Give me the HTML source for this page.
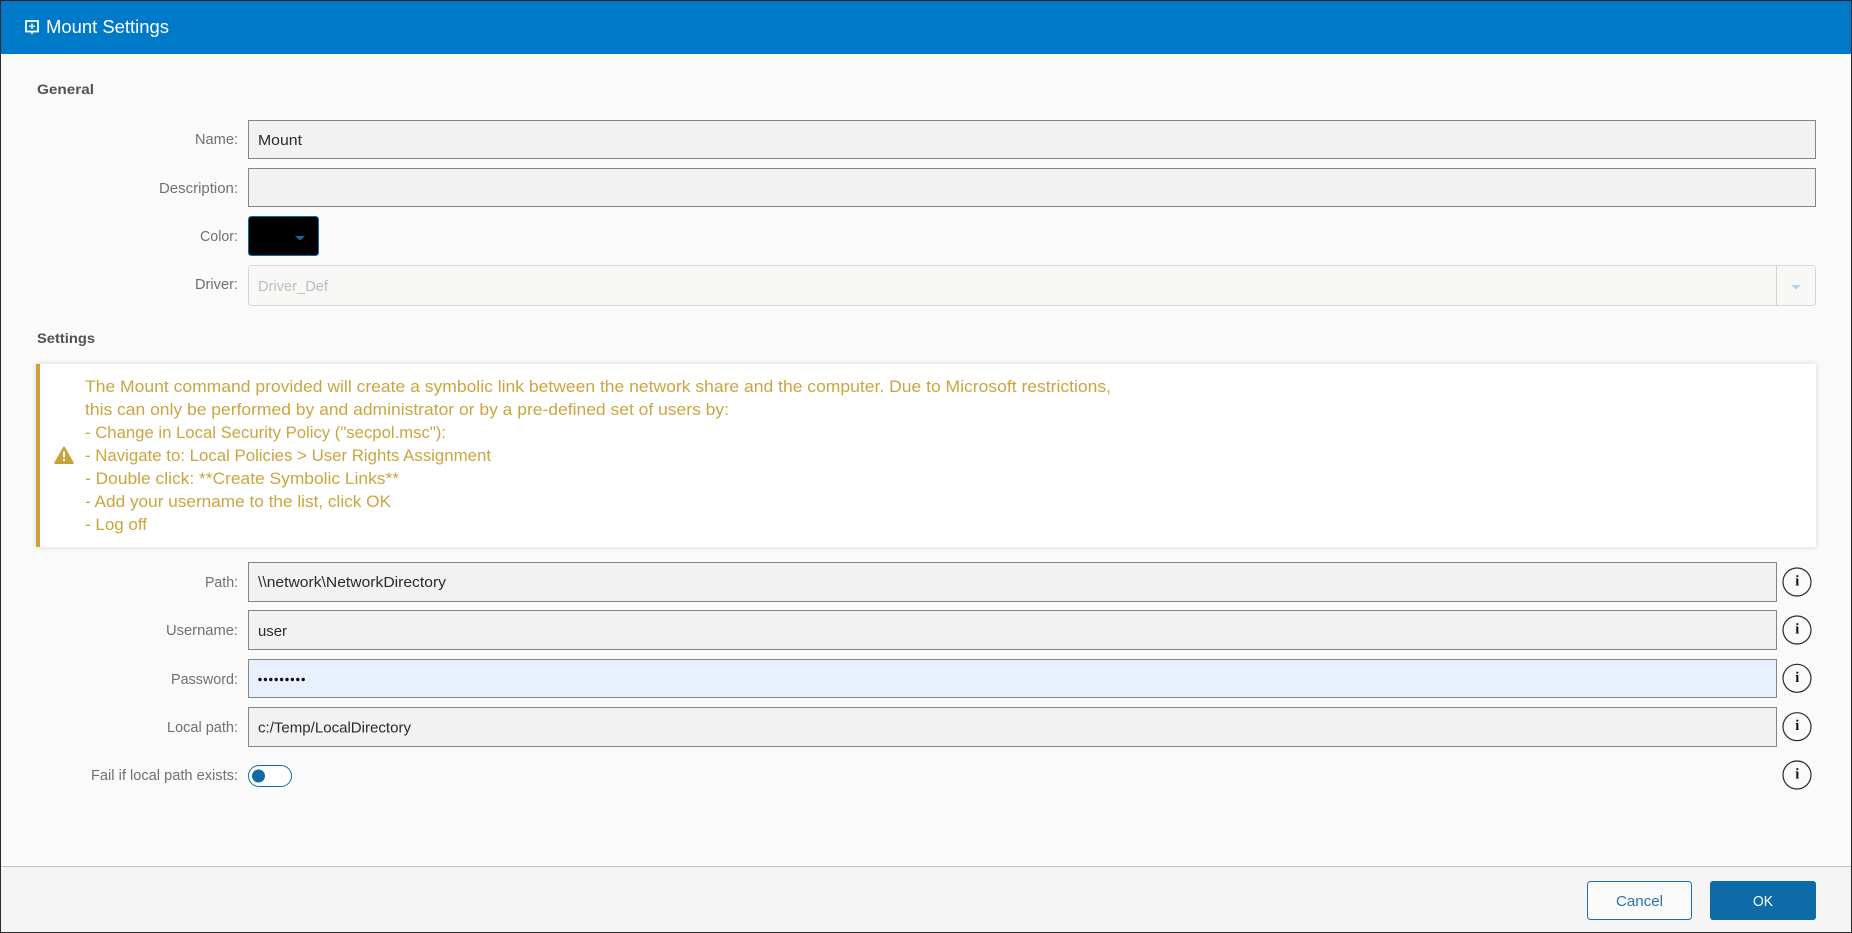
<!DOCTYPE html>
<html lang="en"><head><meta charset="utf-8"><title>Mount Settings</title>
<style>
html,body{margin:0;padding:0;background:#fafafa;width:1852px;height:933px;overflow:hidden}
svg{display:block}
text{font-family:"Liberation Sans",Arial,sans-serif;white-space:pre}
.lb{font-size:14.3px;fill:#707070}
.v{font-size:14.3px;fill:#2b2b2b}
.w{font-size:16.4px;fill:#cba540}
.h{font-size:14px;font-weight:bold;fill:#565050}
.inp{fill:#f2f2f2;stroke:#858585;stroke-width:1}
.ii{font-family:"Liberation Serif",serif;font-size:14.5px;font-weight:bold;fill:#111;text-anchor:middle}
</style></head><body>
<svg width="1852" height="933" viewBox="0 0 1852 933" xmlns="http://www.w3.org/2000/svg">
<defs><filter id="s" x="-2%" y="-10%" width="104%" height="120%"><feDropShadow dx="0" dy="0" stdDeviation="3" flood-color="#000" flood-opacity=".15"/></filter></defs>
<rect width="1852" height="933" fill="#fafafa"/>
<rect x="0" y="0" width="1852" height="54" fill="#0079c8"/>
<rect x="0" y="866" width="1852" height="67" fill="#f5f5f5"/>
<rect x="0" y="866" width="1852" height="1" fill="#c9bfc0"/>
<!-- header icon -->
<path d="M26 21h12v10.500h-5l-1 1.500-1-1.500h-5z" fill="none" stroke="#fff" stroke-width="1.800"/>
<path d="M32 23.500v5.500M29.200 26.200h5.600" stroke="#fff" stroke-width="1.500"/>
<text x="46" y="33" font-size="18.300" fill="#fff" textLength="123" lengthAdjust="spacingAndGlyphs">Mount Settings</text>

<text class="h" x="37" y="94" textLength="57" lengthAdjust="spacingAndGlyphs">General</text>
<text class="lb" x="195" y="144" textLength="43" lengthAdjust="spacingAndGlyphs">Name:</text>
<rect class="inp" x="248.500" y="120.500" width="1567" height="38"/>
<text class="v" x="258" y="145" textLength="44" lengthAdjust="spacingAndGlyphs">Mount</text>
<text class="lb" x="159" y="193" textLength="79" lengthAdjust="spacingAndGlyphs">Description:</text>
<rect class="inp" x="248.500" y="168.500" width="1567" height="38"/>
<text class="lb" x="200" y="241" textLength="38" lengthAdjust="spacingAndGlyphs">Color:</text>
<rect x="248.500" y="216.500" width="70" height="39" rx="3" fill="#000" stroke="#0e6ba8"/>
<path d="M295 236h10l-5 4.500z" fill="#0e6ba8"/>
<text class="lb" x="195" y="289" textLength="43" lengthAdjust="spacingAndGlyphs">Driver:</text>
<rect x="248.500" y="265.500" width="1567" height="40" rx="3" fill="#f7f7f6" stroke="#d6d6d6"/>
<rect x="1776" y="266" width="1" height="39" fill="#d6d6d6"/>
<path d="M1791 285h10l-5 4.500z" fill="#b5d2ea"/>
<text x="258" y="291" font-size="14.300" fill="#bdbdbd" textLength="70" lengthAdjust="spacingAndGlyphs">Driver_Def</text>

<text class="h" x="37" y="343" textLength="58" lengthAdjust="spacingAndGlyphs">Settings</text>
<rect x="36" y="364" width="1780" height="183" fill="#fff" filter="url(#s)"/>
<rect x="36" y="364" width="4" height="183" fill="#cda136"/>
<path d="M64 447.500 L72.800 463 H55.200 Z" fill="#c9a23a" stroke="#c9a23a" stroke-width="2" stroke-linejoin="round"/>
<path d="M64 451.500v6" stroke="#fff" stroke-width="2"/><rect x="63" y="459" width="2" height="2" fill="#fff"/>
<text class="w" x="85" y="392" textLength="1026" lengthAdjust="spacingAndGlyphs">The Mount command provided will create a symbolic link between the network share and the computer. Due to Microsoft restrictions,</text>
<text class="w" x="85" y="415" textLength="644" lengthAdjust="spacingAndGlyphs">this can only be performed by and administrator or by a pre-defined set of users by:</text>
<text class="w" x="85" y="438" textLength="361" lengthAdjust="spacingAndGlyphs">- Change in Local Security Policy ("secpol.msc"):</text>
<text class="w" x="85" y="461" textLength="406" lengthAdjust="spacingAndGlyphs">- Navigate to: Local Policies &gt; User Rights Assignment</text>
<text class="w" x="85" y="484" textLength="314" lengthAdjust="spacingAndGlyphs">- Double click: **Create Symbolic Links**</text>
<text class="w" x="85" y="507" textLength="306" lengthAdjust="spacingAndGlyphs">- Add your username to the list, click OK</text>
<text class="w" x="85" y="530" textLength="62" lengthAdjust="spacingAndGlyphs">- Log off</text>

<text class="lb" x="205" y="587" textLength="33" lengthAdjust="spacingAndGlyphs">Path:</text>
<rect class="inp" x="248.500" y="562.500" width="1528" height="39"/>
<text class="v" x="258" y="587" textLength="188" lengthAdjust="spacingAndGlyphs">\\network\NetworkDirectory</text>
<text class="lb" x="166" y="635" textLength="72" lengthAdjust="spacingAndGlyphs">Username:</text>
<rect class="inp" x="248.500" y="610.500" width="1528" height="39"/>
<text class="v" x="258" y="636" textLength="29" lengthAdjust="spacingAndGlyphs">user</text>
<text class="lb" x="171" y="684" textLength="67" lengthAdjust="spacingAndGlyphs">Password:</text>
<rect x="248.500" y="659.500" width="1528" height="38" fill="#e8f0fe" stroke="#858585"/>
<g fill="#111"><circle cx="260" cy="679.500" r="1.700"/><circle cx="265.400" cy="679.500" r="1.700"/><circle cx="270.800" cy="679.500" r="1.700"/><circle cx="276.200" cy="679.500" r="1.700"/><circle cx="281.600" cy="679.500" r="1.700"/><circle cx="287" cy="679.500" r="1.700"/><circle cx="292.400" cy="679.500" r="1.700"/><circle cx="297.800" cy="679.500" r="1.700"/><circle cx="303.200" cy="679.500" r="1.700"/></g>
<text class="lb" x="167" y="732" textLength="71" lengthAdjust="spacingAndGlyphs">Local path:</text>
<rect class="inp" x="248.500" y="707.500" width="1528" height="39"/>
<text class="v" x="258" y="732.500" textLength="153" lengthAdjust="spacingAndGlyphs">c:/Temp/LocalDirectory</text>
<text class="lb" x="91" y="780" textLength="147" lengthAdjust="spacingAndGlyphs">Fail if local path exists:</text>
<rect x="248.500" y="765.500" width="43" height="21" rx="10.500" fill="#fff" stroke="#0e6ba8"/>
<circle cx="258.500" cy="776" r="6.500" fill="#0e6ba8"/>

<g fill="none" stroke="#2a2a2a" stroke-width="1.200">
<circle cx="1797" cy="582" r="14"/><circle cx="1797" cy="630" r="14"/><circle cx="1797" cy="678.300" r="14"/><circle cx="1797" cy="726.700" r="14"/><circle cx="1797" cy="775" r="14"/>
</g>
<text class="ii" x="1797.300" y="585.500">i</text>
<text class="ii" x="1797.300" y="633.500">i</text>
<text class="ii" x="1797.300" y="682">i</text>
<text class="ii" x="1797.300" y="730">i</text>
<text class="ii" x="1797.300" y="778.500">i</text>

<rect x="1587.500" y="881.500" width="104" height="38" rx="3" fill="#fafafa" stroke="#1f6fa8"/>
<text x="1616" y="906" font-size="14.300" fill="#2a72a8" textLength="47" lengthAdjust="spacingAndGlyphs">Cancel</text>
<rect x="1710" y="881" width="106" height="39" rx="3" fill="#0e6ba8"/>
<text x="1753" y="906" font-size="14.300" fill="#fff" textLength="20" lengthAdjust="spacingAndGlyphs">OK</text>

<rect x="0" y="0" width="1852" height="1" fill="#222"/>
<rect x="0" y="0" width="1" height="933" fill="#2a2a2a"/>
<rect x="1851" y="0" width="1" height="933" fill="#2a2a2a"/>
<rect x="0" y="932" width="1852" height="1" fill="#2a2a2a"/>
</svg>
</body></html>
